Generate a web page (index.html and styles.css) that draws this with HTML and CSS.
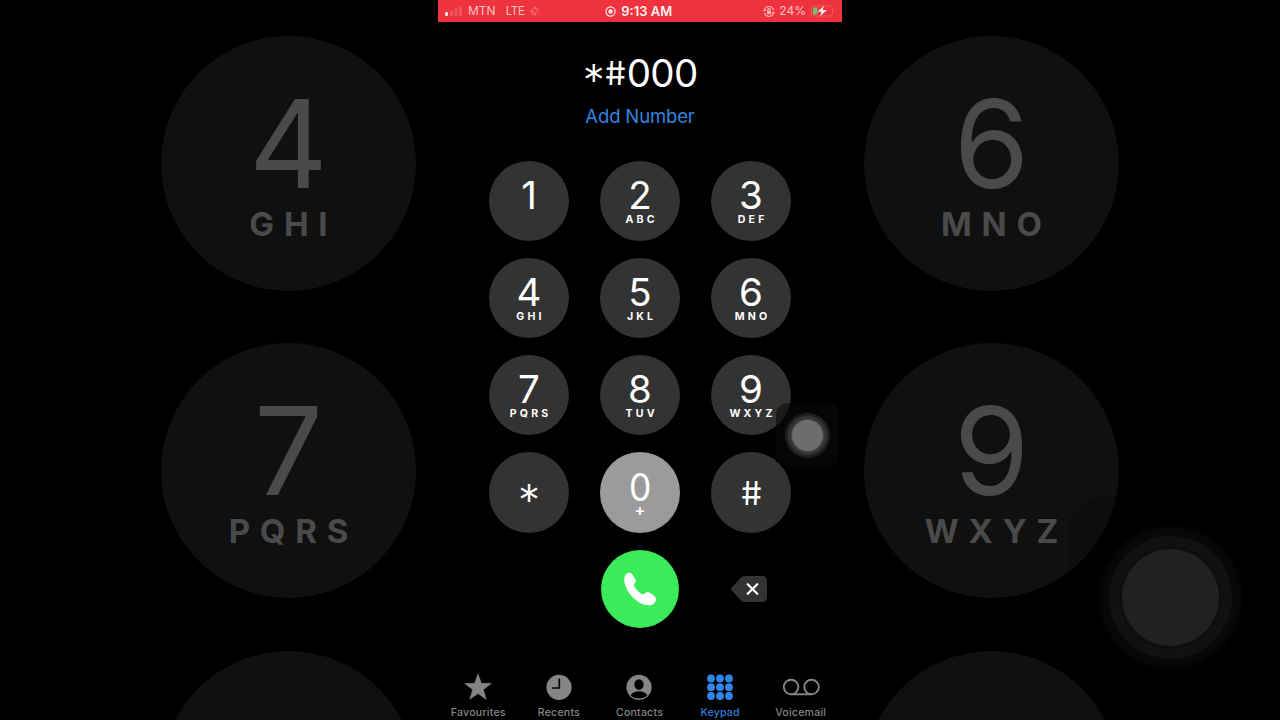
FILE: index.html
```html
<!DOCTYPE html>
<html lang="en">
<head>
    <meta charset="UTF-8">
    <meta name="viewport" content="width=device-width, initial-scale=1.0">
    <title>Keypad</title>
    <link rel="stylesheet" href="styles.css">
</head>
<body>
    <div class="stage">
        <!-- enlarged keys on the left -->
        <div class="backdrop left">
            <div class="big-key"><span class="big-digit">4</span><span class="big-letters">GHI</span></div>
            <div class="big-key"><span class="big-digit">7</span><span class="big-letters">PQRS</span></div>
            <div class="big-key"></div>
        </div>

        <div class="phone">
            <div class="status-bar">
                <div class="status-left">
                    <svg class="signal" width="18" height="12" viewBox="0 0 18 12">
                        <rect x="0" y="7" width="3" height="4" rx="1" fill="#ffe0e0"/>
                        <rect x="5" y="5.5" width="3" height="5.5" rx="1" fill="#f2565d"/>
                        <rect x="9.5" y="3" width="3" height="8" rx="1" fill="#f2565d"/>
                        <rect x="14" y="1" width="3" height="10" rx="1" fill="#f2565d"/>
                    </svg>
                    <span class="carrier">MTN</span>
                    <span class="network">LTE</span>
                    <svg class="spinner" width="10" height="10" viewBox="0 0 10 10" stroke="#ff9c9c" stroke-width="1" stroke-linecap="round">
                        <path d="M5 .8v2M8 2L6.600 3.400M5 9.200v-2M2 8l1.400-1.400M.8 5h2" />
                        <path d="M9.200 5h-2M8 8L6.600 6.600M2 2l1.400 1.400" stroke="#f5666c"/>
                    </svg>
                </div>
                <div class="status-time">
                    <svg width="11" height="11" viewBox="0 0 11 11">
                        <circle cx="5.500" cy="5.500" r="4.600" fill="none" stroke="#ffe6e6" stroke-width="1.200"/>
                        <circle cx="5.500" cy="5.500" r="2.200" fill="#ffe6e6"/>
                    </svg>
                    <span>9:13 AM</span>
                </div>
                <div class="status-right">
                    <svg width="12" height="11" viewBox="0 0 12 11" fill="none" stroke="#ffb8b8" stroke-width="1.100">
                        <path d="M1.500 4A4.600 4.600 0 0 1 10.500 4.300M10.400 7A4.600 4.600 0 0 1 1.600 7M.4 5.300L1.500 3.600l1.500 1.200M11.500 5.700L10.400 7.400 9 6.200"/>
                        <rect x="4" y="5" width="4" height="3" fill="#ffb8b8" stroke="none"/>
                        <path d="M4.800 5V3.800a1.200 1.200 0 0 1 2.400 0V5"/>
                    </svg>
                    <span>24%</span>
                    <svg width="25" height="12" viewBox="0 0 25 12">
                        <rect x=".5" y="1" width="21" height="10" rx="3" fill="none" stroke="#f2565d"/>
                        <path d="M23 4.500q1.500 1.500 0 3z" fill="#f2565d"/>
                        <rect x="2" y="2.500" width="4.500" height="7" rx="1.200" fill="#6fc269"/>
                        <path d="M13 .8L6.500 6.800h4L9 11.200l7-6.200h-4.300z" fill="#fff0f0"/>
                    </svg>
                </div>
            </div>

            <div class="number"><span class="star">*</span><span class="hash">#</span><span class="zeros">000</span></div>
            <div class="add-number">Add Number</div>

            <div class="keypad">
                <div class="key"><span class="digit">1</span></div>
                <div class="key"><span class="digit">2</span><span class="letters">ABC</span></div>
                <div class="key"><span class="digit">3</span><span class="letters">DEF</span></div>
                <div class="key"><span class="digit">4</span><span class="letters">GHI</span></div>
                <div class="key"><span class="digit">5</span><span class="letters">JKL</span></div>
                <div class="key"><span class="digit">6</span><span class="letters">MNO</span></div>
                <div class="key"><span class="digit">7</span><span class="letters">PQRS</span></div>
                <div class="key"><span class="digit">8</span><span class="letters">TUV</span></div>
                <div class="key"><span class="digit">9</span><span class="letters">WXYZ</span></div>
                <div class="key symbol"><span class="key-star">*</span></div>
                <div class="key pressed"><span class="digit zero">0</span><span class="plus">+</span></div>
                <div class="key symbol"><span class="key-hash">#</span></div>
            </div>

            <div class="actions">
                <div class="call">
                    <svg width="34" height="34" viewBox="99 95 102 102">
                        <path fill="#fff" d="M103 112C104 103 112 96 119 97C127 98 131 109 136 117C139 122 138 125 134 129C130 134 131 137 136 143C143 152 149 158 155 161C160 163 162 160 167 157C172 153 178 156 185 161C192 166 199 170 198 178C197 187 188 195 176 195C160 195 143 186 128 171C111 153 101 130 103 112Z"/>
                    </svg>
                </div>
                <svg class="delete" width="36" height="26" viewBox="0 0 36 26">
                    <path d="M.8 11.500L9.500 2Q11.300 0 14 0H31Q36 0 36 5V21Q36 26 31 26H14Q11.300 26 9.500 24L.8 14.500Q-.4 13 .8 11.500Z" fill="#333"/>
                    <path d="M16.700 8.200l9.600 9.600M26.300 8.200l-9.600 9.600" stroke="#fff" stroke-width="2.200" stroke-linecap="round"/>
                </svg>
            </div>

            <div class="tab-bar">
                <div class="tab">
                    <svg width="28" height="28" viewBox="0 0 28 28">
                        <path d="M14 .8L17.300 10.300L27.300 10.500L19.300 16.600L22.200 26.300L14 20.500L5.800 26.300L8.700 16.600L.7 10.500L10.700 10.300Z" fill="#858585" stroke="#858585" stroke-width=".6" stroke-linejoin="round"/>
                    </svg>
                    <span>Favourites</span>
                </div>
                <div class="tab">
                    <svg width="28" height="28" viewBox="0 0 28 28">
                        <circle cx="14" cy="14.300" r="12.600" fill="#858585"/>
                        <path d="M14.300 5.500v9.500H7" fill="none" stroke="#000" stroke-width="1.700"/>
                    </svg>
                    <span>Recents</span>
                </div>
                <div class="tab">
                    <svg width="28" height="28" viewBox="0 0 28 28">
                        <circle cx="14" cy="14.300" r="12.600" fill="#858585"/>
                        <ellipse cx="14" cy="11.500" rx="4.600" ry="5.300" fill="#000"/>
                        <path d="M5.600 22.200Q8.500 18.300 14 18.300T22.400 22.200Q19 25.500 14 25.500T5.600 22.200Z" fill="#000"/>
                    </svg>
                    <span>Contacts</span>
                </div>
                <div class="tab active">
                    <svg width="28" height="28" viewBox="0 0 28 28" fill="#2f86e8">
                        <circle cx="5" cy="5.500" r="3.900"/><circle cx="14" cy="5.500" r="3.900"/><circle cx="23" cy="5.500" r="3.900"/>
                        <circle cx="5" cy="14.200" r="3.900"/><circle cx="14" cy="14.200" r="3.900"/><circle cx="23" cy="14.200" r="3.900"/>
                        <circle cx="5" cy="23" r="3.900"/><circle cx="14" cy="23" r="3.900"/><circle cx="23" cy="23" r="3.900"/>
                    </svg>
                    <span>Keypad</span>
                </div>
                <div class="tab">
                    <svg width="38" height="28" viewBox="0 0 38 28" fill="none" stroke="#858585" stroke-width="1.900">
                        <circle cx="9.100" cy="14" r="7.300"/>
                        <circle cx="29.500" cy="14" r="7.300"/>
                        <path d="M9.100 21.300h20.400"/>
                    </svg>
                    <span>Voicemail</span>
                </div>
            </div>

            <div class="touch"><div class="touch-dot"></div></div>
        </div>

        <!-- enlarged keys on the right -->
        <div class="backdrop right">
            <div class="big-key"><span class="big-digit">6</span><span class="big-letters">MNO</span></div>
            <div class="big-key"><span class="big-digit">9</span><span class="big-letters">WXYZ</span></div>
            <div class="big-key"></div>
            <div class="big-touch"><div class="big-touch-dot"></div></div>
        </div>
    </div>
</body>
</html>
```

FILE: styles.css
```css
* {
    box-sizing: border-box;
}

body {
    margin: 0;
    background-color: #000;
    overflow: hidden;
    font-family: Inter, 'Liberation Sans', sans-serif;
}

svg {
    display: block;
    flex: none;
}

.stage {
    display: flex;
    width: 1280px;
    height: 720px;
    overflow: hidden;
}

/* dimmed side panels */
.backdrop {
    position: relative;
    width: 438px;
    height: 720px;
    padding: 35.5px 22px 0;
    display: flex;
    flex-direction: column;
    gap: 52.6px;
    overflow: hidden;
}

.backdrop.left {
    align-items: flex-end;
}

.backdrop.right {
    align-items: flex-start;
}

.big-key {
    flex: none;
    width: 255px;
    height: 255px;
    padding-top: 48px;
    border-radius: 50%;
    background: #101010;
    color: #4a4a4a;
    display: flex;
    flex-direction: column;
    align-items: center;
}

.big-digit {
    font-size: 122px;
    line-height: 120px;
    font-weight: 400;
}

.big-letters {
    margin-top: 3px;
    font-size: 33px;
    line-height: 34px;
    font-weight: 700;
    letter-spacing: 9.8px;
    margin-right: -9.8px;
}

.big-touch {
    position: absolute;
    left: 226px;
    top: 496px;
    width: 205px;
    height: 203px;
    border-radius: 40px;
    background: rgba(6, 6, 6, 0.2);
    display: flex;
    justify-content: center;
    align-items: center;
}

.big-touch-dot {
    width: 97px;
    height: 97px;
    border-radius: 50%;
    background: #212121;
    box-shadow: 0 0 0 3px #0e0e0e, 0 0 0 13px #111, 0 0 4px 23px #080808;
}

/* phone */
.phone {
    position: relative;
    width: 404px;
    height: 720px;
    background: #000;
    color: #fff;
    display: flex;
    flex-direction: column;
}

.status-bar {
    height: 21.5px;
    padding: 0 6.5px 0 7px;
    background: #ee333e;
    color: #ffc4c4;
    display: grid;
    grid-template-columns: 1fr auto 1fr;
    align-items: center;
    font-size: 12px;
    line-height: 22px;
}

.status-left,
.status-time,
.status-right {
    display: flex;
    align-items: center;
}

.carrier {
    margin-left: 5px;
}

.network {
    margin-left: 10px;
    font-size: 11.5px;
    letter-spacing: -0.2px;
}

.spinner {
    margin-left: 5px;
}

.status-time {
    gap: 5px;
    margin-right: 3px;
    color: #fff0f0;
    font-size: 13px;
    font-weight: 600;
}

.status-right {
    justify-content: flex-end;
    gap: 4.5px;
}

.number {
    height: 40px;
    margin-top: 31.5px;
    display: flex;
    justify-content: center;
    line-height: 40px;
    font-size: 38.5px;
}

.star,
.key-star {
    display: block;
    font-size: 44px;
    line-height: 40px;
    padding-top: 7px;
    font-weight: 350;
}

/* the hash stands nearly upright on this keypad */
.hash,
.key-hash {
    display: block;
    font-size: 33px;
    line-height: 40px;
    font-weight: 400;
    transform: skewX(7deg);
}

.star {
    margin-left: -1px;
}

.zeros {
    margin-left: 1px;
    letter-spacing: -0.6px;
    margin-right: -1.5px;
}

.add-number {
    margin-top: 11px;
    height: 24px;
    line-height: 24px;
    font-size: 18.5px;
    letter-spacing: -0.15px;
    text-align: center;
    color: #3584e0;
}

.keypad {
    margin-top: 32.5px;
    display: grid;
    grid-template-columns: repeat(3, 80.5px);
    grid-auto-rows: 80.5px;
    column-gap: 30.5px;
    row-gap: 16.7px;
    justify-content: center;
}

.key {
    padding-top: 15.5px;
    border-radius: 50%;
    background: #333;
    display: flex;
    flex-direction: column;
    align-items: center;
}

.key.pressed {
    background: #9b9b9b;
}

.key.symbol {
    padding-top: 21px;
}

.digit {
    font-size: 38.5px;
    line-height: 38px;
}

.digit.zero {
    transform: scaleX(0.92);
}

.letters {
    margin-top: 1px;
    margin-right: -3.2px;
    font-size: 10.6px;
    line-height: 10px;
    font-weight: 700;
    letter-spacing: 3.2px;
}

.plus {
    margin-top: -1px;
    font-size: 16px;
    line-height: 10px;
    font-weight: 600;
}

.actions {
    margin-top: 17px;
    height: 78px;
    display: grid;
    grid-template-columns: repeat(3, 80.5px);
    column-gap: 30.5px;
    justify-content: center;
    align-items: center;
    justify-items: center;
}

.call {
    grid-column: 2;
    width: 78px;
    height: 78px;
    border-radius: 50%;
    background: #3bec5a;
    display: flex;
    justify-content: center;
    align-items: center;
}

.delete {
    margin-right: 4px;
}

.tab-bar {
    margin-top: auto;
    padding-bottom: 1px;
    display: grid;
    grid-template-columns: repeat(5, 1fr);
    margin-right: 1px;
}

.tab {
    display: flex;
    flex-direction: column;
    align-items: center;
    color: #858585;
    font-size: 10.6px;
    line-height: 13px;
    letter-spacing: 0.2px;
    font-weight: 500;
}

.tab span {
    margin-top: 5px;
}

.tab.active {
    color: #2f7fd8;
}

/* floating assistive button */
.touch {
    position: absolute;
    left: 338px;
    top: 403px;
    width: 63px;
    height: 64px;
    border-radius: 12px;
    background: rgba(10, 10, 10, 0.6);
    display: flex;
    justify-content: center;
    align-items: center;
}

.touch-dot {
    width: 31px;
    height: 31px;
    border-radius: 50%;
    background: #6d6d6d;
    box-shadow: 0 0 0 1px #484848, 0 0 0 4px #353535, 0 0 1px 7px #202020;
}
```
